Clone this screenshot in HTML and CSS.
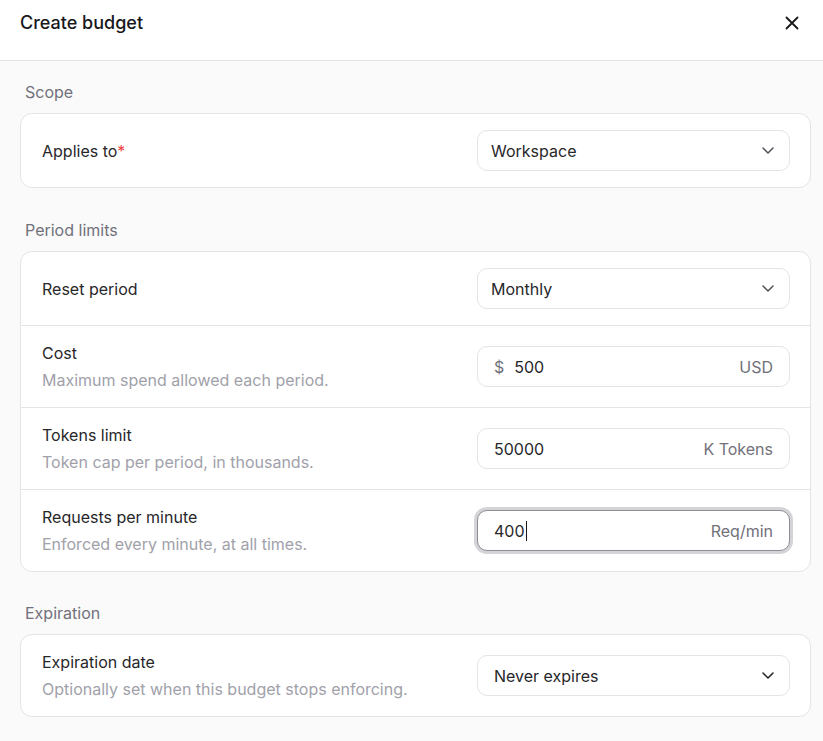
FILE: index.html
```html
<!DOCTYPE html>
<html lang="en">
<head>
<meta charset="utf-8">
<title>Create budget</title>
<link rel="stylesheet" href="styles.css">
</head>
<body>
<div class="dialog">
  <header class="header">
    <h1 class="title">Create budget</h1>
    <button class="close" aria-label="Close">
      <svg width="14" height="14" viewBox="0 0 14 14" fill="none" stroke="#18181b" stroke-width="1.8" stroke-linecap="round"><path d="M1.5 1.5l11 11M12.5 1.5l-11 11"/></svg>
    </button>
  </header>
  <main class="body">
    <section class="section">
      <h2 class="section-title">Scope</h2>
      <div class="card">
        <div class="row">
          <div class="text"><div class="label">Applies to<span class="req">*</span></div></div>
          <div class="control select"><span class="value">Workspace</span>
            <svg class="chev" width="12" height="7" viewBox="0 0 12 7" fill="none" stroke="#52525b" stroke-width="1.5" stroke-linecap="round" stroke-linejoin="round"><path d="M1 1l5 5 5-5"/></svg>
          </div>
        </div>
      </div>
    </section>
    <section class="section">
      <h2 class="section-title">Period limits</h2>
      <div class="card">
        <div class="row">
          <div class="text"><div class="label">Reset period</div></div>
          <div class="control select"><span class="value">Monthly</span>
            <svg class="chev" width="12" height="7" viewBox="0 0 12 7" fill="none" stroke="#52525b" stroke-width="1.5" stroke-linecap="round" stroke-linejoin="round"><path d="M1 1l5 5 5-5"/></svg>
          </div>
        </div>
        <div class="row">
          <div class="text"><div class="label">Cost</div><div class="desc">Maximum spend allowed each period.</div></div>
          <div class="control input"><span class="prefix">$</span><span class="value grow">500</span><span class="suffix">USD</span></div>
        </div>
        <div class="row">
          <div class="text"><div class="label">Tokens limit</div><div class="desc">Token cap per period, in thousands.</div></div>
          <div class="control input"><span class="value grow">50000</span><span class="suffix">K Tokens</span></div>
        </div>
        <div class="row">
          <div class="text"><div class="label">Requests per minute</div><div class="desc">Enforced every minute, at all times.</div></div>
          <div class="control input focused"><span class="value grow">400<span class="caret"></span></span><span class="suffix">Req/min</span></div>
        </div>
      </div>
    </section>
    <section class="section section-last">
      <h2 class="section-title">Expiration</h2>
      <div class="card">
        <div class="row">
          <div class="text"><div class="label">Expiration date</div><div class="desc">Optionally set when this budget stops enforcing.</div></div>
          <div class="control select wide-pad"><span class="value">Never expires</span>
            <svg class="chev" width="12" height="7" viewBox="0 0 12 7" fill="none" stroke="#27272a" stroke-width="1.6" stroke-linecap="round" stroke-linejoin="round"><path d="M1 1l5 5 5-5"/></svg>
          </div>
        </div>
      </div>
    </section>
  </main>
</div>
</body>
</html>
```
FILE: styles.css
```css
* { box-sizing: border-box; }
html, body { margin: 0; padding: 0; }
body {
  font-family: Inter, "Noto Sans", "Liberation Sans", sans-serif;
  background: #fafafa;
  color: #27272a;
  width: 823px;
  height: 741px;
  overflow: hidden;
}
.dialog { display: flex; flex-direction: column; }
.header {
  height: 61px;
  background: #fff;
  border-bottom: 1px solid #e4e4e7;
  display: flex;
  align-items: flex-start;
  justify-content: space-between;
  padding: 11px 24px 0 20px;
}
.title {
  margin: 0;
  font-size: 18px;
  line-height: 24px;
  font-weight: 500;
  color: #18181b;
}
.close {
  border: 0;
  background: transparent;
  padding: 0;
  margin-top: 5px;
  width: 14px;
  height: 14px;
  display: flex;
}
.body {
  padding: 21px 12px 0 20px;
  display: flex;
  flex-direction: column;
  gap: 32px;
}
.section { display: flex; flex-direction: column; gap: 11px; }
.section-last { margin-top: -1px; }
.section-title {
  margin: 0;
  padding-left: 5px;
  font-size: 16px;
  line-height: 20px;
  font-weight: 400;
  color: #71717a;
}
.card {
  background: #fff;
  border: 1px solid #e4e4e7;
  border-radius: 12px;
}
.row {
  display: flex;
  align-items: center;
  justify-content: space-between;
  padding: 16px 20px 16px 21px;
}
.row + .row { border-top: 1px solid #e4e4e7; }
.text { display: flex; flex-direction: column; gap: 5px; }
.label { font-size: 16px; line-height: 22px; color: #27272a; }
.req { color: #ef4444; }
.desc { font-size: 16px; line-height: 22px; color: #a1a1aa; }
.control {
  width: 313px;
  height: 41px;
  border: 1px solid #e4e4e7;
  border-radius: 10px;
  background: #fff;
  display: flex;
  align-items: center;
  font-size: 16px;
  color: #27272a;
}
.select { padding: 0 15px 0 13px; justify-content: space-between; }
.select.wide-pad { padding-left: 16px; }
.input { padding: 0 16px 0 16px; }
.prefix { color: #71717a; margin-right: 10px; }
.grow { flex: 1; display: flex; align-items: center; }
.suffix { color: #71717a; }
.focused {
  border-color: #8e8e93;
  box-shadow: 0 0 0 3px #d4d4d8;
}
.caret {
  display: inline-block;
  width: 1px;
  height: 20px;
  background: #18181b;
  margin-left: 1px;
}
```
